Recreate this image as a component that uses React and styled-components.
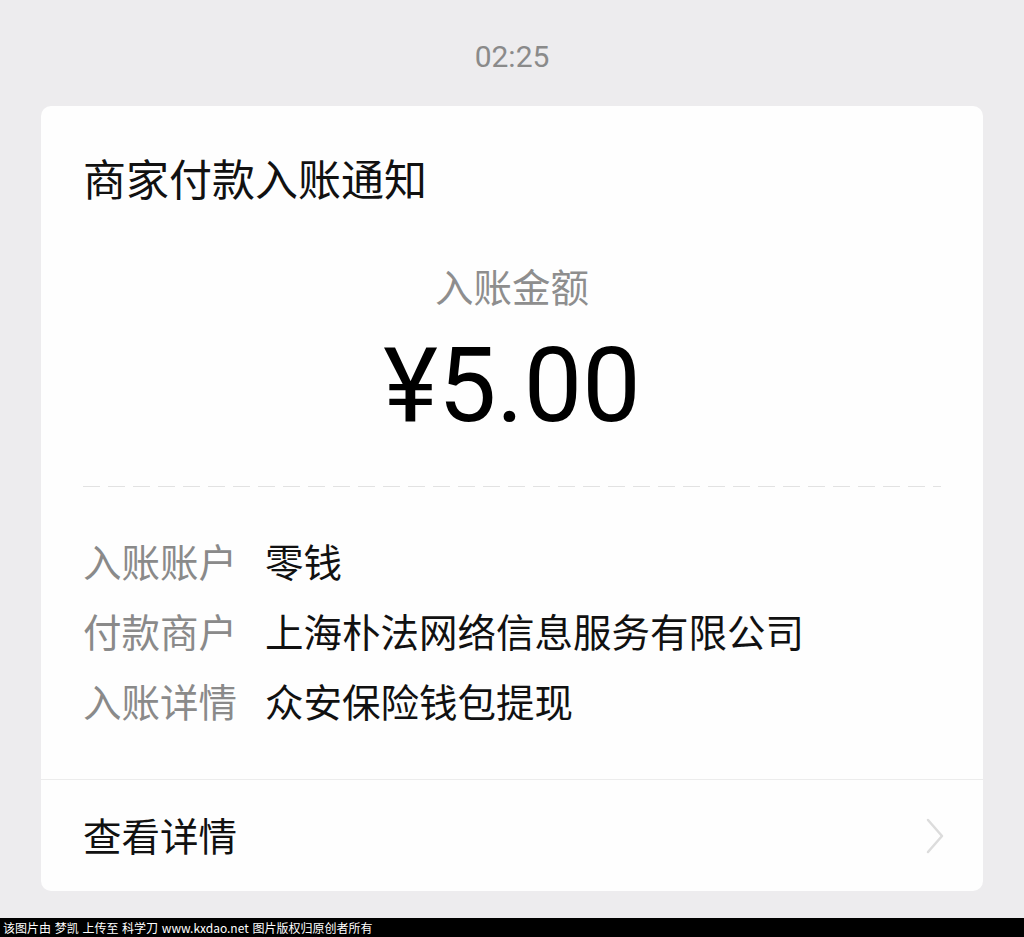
import React from "react";
import styled, { createGlobalStyle } from "styled-components";

const Global = createGlobalStyle`
  html, body { margin: 0; padding: 0; background: #EDECEE; }
  body { font-family: "Noto Sans CJK SC", "Noto Sans", sans-serif; }
  * { box-sizing: border-box; }
`;

const Page = styled.div`
  height: 937px;
  display: flex;
  flex-direction: column;
  background: #EDECEE;
  overflow: hidden;
`;

const Time = styled.div`
  padding-top: 37px;
  height: 106px;
  text-align: center;
  font-family: Roboto, "Noto Sans", sans-serif;
  font-size: 30px;
  line-height: 40px;
  color: #8a8a8a;
`;

const Card = styled.div`
  margin: 0 41px;
  background: #fefefe;
  border-radius: 10px;
  display: flex;
  flex-direction: column;
`;

const Body = styled.div`
  padding: 41px 42px 44px;
`;

const Title = styled.div`
  font-size: 43px;
  line-height: 60px;
  color: #111;
`;

const AmountBlock = styled.div`
  margin-top: 53px;
  display: flex;
  flex-direction: column;
  align-items: center;
`;

const AmountLabel = styled.div`
  font-size: 38.5px;
  line-height: 50px;
  color: #8e8e8e;
`;

const Amount = styled.div`
  margin-top: 16px;
  font-family: Roboto, "Noto Sans", sans-serif;
  font-size: 104px;
  line-height: 120px;
  color: #000;
`;

const Dashed = styled.div`
  margin-top: 40px;
  height: 1px;
  background: repeating-linear-gradient(
    to right,
    #e2e2e2 0,
    #e2e2e2 17px,
    transparent 17px,
    transparent 25px
  );
`;

const Rows = styled.div`
  margin-top: 38px;
  display: flex;
  flex-direction: column;
`;

const Row = styled.div`
  display: flex;
  align-items: center;
  height: 70px;
  font-size: 38.5px;
`;

const Label = styled.span`
  width: 182px;
  flex-shrink: 0;
  color: #8a8a8a;
`;

const Value = styled.span`
  color: #111;
`;

const Divider = styled.div`
  height: 1px;
  background: #ececec;
`;

const Footer = styled.div`
  height: 111px;
  padding: 0 38px 4px 42px;
  display: flex;
  align-items: center;
  justify-content: space-between;
  font-size: 38.5px;
  color: #111;
`;

const Chevron = styled.svg`
  width: 20px;
  height: 36px;
  display: block;
  margin-top: 4px;
`;

const Watermark = styled.div`
  margin-top: auto;
  height: 19px;
  background: #000;
  color: #fff;
  font-size: 12px;
  line-height: 19px;
  padding-left: 3px;
  white-space: pre;
  word-spacing: 1px;
  font-family: "Noto Sans CJK SC", "Liberation Sans", sans-serif;
`;

const rows = [
  ["入账账户", "零钱"],
  ["付款商户", "上海朴法网络信息服务有限公司"],
  ["入账详情", "众安保险钱包提现"],
];

export default function App() {
  return (
    <Page>
      <Global />
      <Time>02:25</Time>
      <Card>
        <Body>
          <Title>商家付款入账通知</Title>
          <AmountBlock>
            <AmountLabel>入账金额</AmountLabel>
            <Amount>¥5.00</Amount>
          </AmountBlock>
          <Dashed />
          <Rows>
            {rows.map(([k, v]) => (
              <Row key={k}>
                <Label>{k}</Label>
                <Value>{v}</Value>
              </Row>
            ))}
          </Rows>
        </Body>
        <Divider />
        <Footer>
          <span>查看详情</span>
          <Chevron viewBox="0 0 20 36">
            <polyline
              points="3,2 17,18 3,34"
              fill="none"
              stroke="#dcdcdc"
              strokeWidth="2.5"
              strokeLinecap="round"
              strokeLinejoin="round"
            />
          </Chevron>
        </Footer>
      </Card>
      <Watermark>该图片由 梦凯 上传至 科学刀 www.kxdao.net 图片版权归原创者所有</Watermark>
    </Page>
  );
}
